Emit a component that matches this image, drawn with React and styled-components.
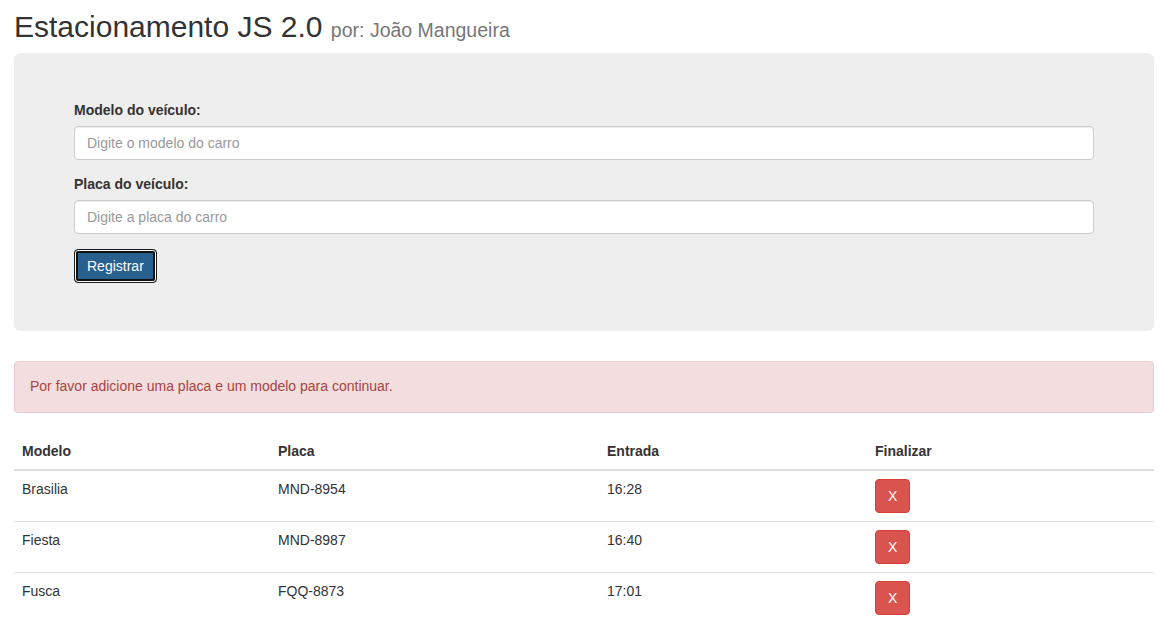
import React from "react";
import styled, { createGlobalStyle } from "styled-components";

const GlobalStyle = createGlobalStyle`
  * { box-sizing: border-box; }
  body {
    margin: 0;
    background: #fff;
    font-family: "Liberation Sans", Arial, Helvetica, sans-serif;
    font-size: 14px;
    line-height: 1.42857;
    color: #333;
  }
`;

const Container = styled.div`
  width: 1140px;
  margin-left: 14px;
`;

const Title = styled.h2`
  margin: 10px 0 10px;
  font-size: 30px;
  font-weight: 500;
  line-height: 1.1;
  color: #333;

  small {
    font-size: 65%;
    font-weight: 400;
    color: #777;
  }
`;

const Jumbotron = styled.div`
  background: #eee;
  border-radius: 6px;
  padding: 48px 60px;
  margin-bottom: 30px;
`;

const FormGroup = styled.div`
  margin-bottom: 15px;
`;

const Label = styled.label`
  display: inline-block;
  margin-bottom: 5px;
  font-weight: 700;
`;

const Input = styled.input`
  display: block;
  width: 100%;
  height: 34px;
  padding: 6px 12px;
  font-family: inherit;
  font-size: 14px;
  color: #555;
  background: #fff;
  border: 1px solid #ccc;
  border-radius: 4px;
  box-shadow: inset 0 1px 1px rgba(0, 0, 0, 0.075);

  &::placeholder {
    color: #999;
  }
`;

const Button = styled.button`
  display: inline-block;
  height: 34px;
  padding: 6px 12px;
  font-family: inherit;
  font-size: 14px;
  line-height: 20px;
  color: #fff;
  border-radius: 4px;
  cursor: pointer;
  background: ${(p) => (p.danger ? "#d9534f" : "#286090")};
  border: 1px solid ${(p) => (p.danger ? "#d43f3a" : "#1a1a1a")};
  box-shadow: ${(p) =>
    p.focused ? "inset 0 0 0 1px #fff, inset 0 0 0 3px #111" : "none"};
`;

const Alert = styled.div`
  padding: 15px;
  margin-bottom: 20px;
  background: #f2dede;
  border: 1px solid #ebccd1;
  border-radius: 4px;
  color: #a94442;
`;

const Table = styled.table`
  width: 100%;
  border-collapse: collapse;
  border-spacing: 0;
`;

const Th = styled.th`
  text-align: left;
  padding: 8px;
  line-height: 20px;
  vertical-align: bottom;
  border-bottom: 2px solid #ddd;
  width: ${(p) => p.w}px;
`;

const Td = styled.td`
  padding: 8px;
  line-height: 20px;
  vertical-align: top;
  border-top: 1px solid #ddd;
`;

const carros = [
  { modelo: "Brasilia", placa: "MND-8954", entrada: "16:28" },
  { modelo: "Fiesta", placa: "MND-8987", entrada: "16:40" },
  { modelo: "Fusca", placa: "FQQ-8873", entrada: "17:01" },
];

export default function App() {
  return (
    <>
      <GlobalStyle />
      <Container>
        <Title>
          Estacionamento JS 2.0 <small>por: João Mangueira</small>
        </Title>

        <Jumbotron>
          <FormGroup>
            <Label>Modelo do veículo:</Label>
            <Input placeholder="Digite o modelo do carro" />
          </FormGroup>
          <FormGroup>
            <Label>Placa do veículo:</Label>
            <Input placeholder="Digite a placa do carro" />
          </FormGroup>
          <Button focused>Registrar</Button>
        </Jumbotron>

        <Alert>Por favor adicione uma placa e um modelo para continuar.</Alert>

        <Table>
          <thead>
            <tr>
              <Th w={256}>Modelo</Th>
              <Th w={329}>Placa</Th>
              <Th w={268}>Entrada</Th>
              <Th w={287}>Finalizar</Th>
            </tr>
          </thead>
          <tbody>
            {carros.map((c) => (
              <tr key={c.placa}>
                <Td>{c.modelo}</Td>
                <Td>{c.placa}</Td>
                <Td>{c.entrada}</Td>
                <Td>
                  <Button danger>X</Button>
                </Td>
              </tr>
            ))}
          </tbody>
        </Table>
      </Container>
    </>
  );
}
